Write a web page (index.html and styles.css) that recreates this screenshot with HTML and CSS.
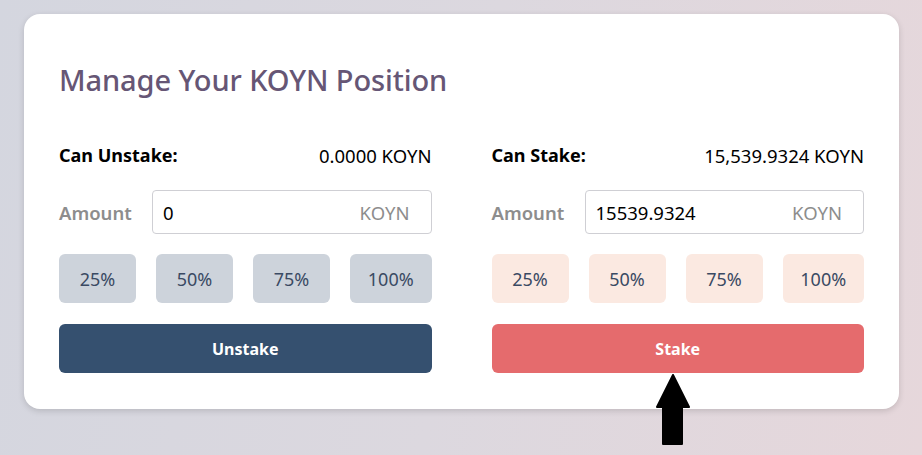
FILE: index.html
```html
<!DOCTYPE html>
<html>
<head>
<meta charset="utf-8">
<link rel="stylesheet" href="styles.css">
</head>
<body>
<div class="page">
  <div class="card">
    <h1 class="title">Manage Your KOYN Position</h1>
    <div class="cols">
      <div class="col">
        <div class="row-info"><span class="lbl">Can Unstake:</span><span class="val">0.0000 KOYN</span></div>
        <div class="row-amount">
          <span class="amt-lbl">Amount</span>
          <div class="input"><span class="in-val">0</span><span class="unit">KOYN</span></div>
        </div>
        <div class="pcts">
          <button class="pct gray">25%</button>
          <button class="pct gray">50%</button>
          <button class="pct gray">75%</button>
          <button class="pct gray wide">100%</button>
        </div>
        <button class="main unstake">Unstake</button>
      </div>
      <div class="col">
        <div class="row-info"><span class="lbl">Can Stake:</span><span class="val">15,539.9324 KOYN</span></div>
        <div class="row-amount">
          <span class="amt-lbl">Amount</span>
          <div class="input"><span class="in-val">15539.9324</span><span class="unit">KOYN</span></div>
        </div>
        <div class="pcts">
          <button class="pct peach">25%</button>
          <button class="pct peach">50%</button>
          <button class="pct peach">75%</button>
          <button class="pct peach wide">100%</button>
        </div>
        <button class="main stake">Stake</button>
      </div>
    </div>
  </div>
  <svg class="arrow" width="36" height="72" viewBox="0 0 36 72">
    <path d="M18 1 L34 33 L27 33 L27 70 L8 70 L8 33 L2 33 Z" fill="#000" stroke="#000" stroke-width="2" stroke-linejoin="round"/>
  </svg>
</div>
</body>
</html>
```
FILE: styles.css
```css
* { box-sizing: border-box; }
html, body { margin: 0; padding: 0; }
body {
  width: 922px;
  height: 455px;
  overflow: hidden;
  font-family: "Noto Sans", "Open Sans", sans-serif;
  background: linear-gradient(100deg, #d4d6df 0%, #dcd8df 50%, #e6d7db 100%);
}
.page {
  position: relative;
  padding: 14px 24px 0 24px;
  height: 455px;
}
.card {
  width: 875px;
  background: #fff;
  border-radius: 16px;
  box-shadow: 0 2px 6px rgba(0,0,0,0.15);
  padding: 50px 35px 36px 35px;
}
.title {
  margin: 0;
  font-size: 29px;
  font-weight: 500;
  color: #665675;
  line-height: 32px;
  letter-spacing: -0.1px;
}
.cols {
  display: flex;
  gap: 60px;
  margin-top: 47px;
}
.col {
  flex: 1;
  display: flex;
  flex-direction: column;
}
.row-info {
  display: flex;
  justify-content: space-between;
  align-items: center;
  height: 24px;
  color: #000;
}
.lbl { font-weight: 700; font-size: 18px; }
.val { font-weight: 400; font-size: 18.5px; }
.row-amount {
  display: flex;
  align-items: center;
  margin-top: 23px;
  gap: 16px;
}
.amt-lbl {
  font-size: 18.5px;
  font-weight: 600;
  color: #8d8d8d;
  width: 77px;
}
.input {
  flex: 1;
  height: 44px;
  border: 1px solid #cfcfd4;
  border-radius: 4px;
  display: flex;
  align-items: center;
  justify-content: space-between;
  padding: 0 21px 0 10px;
  font-size: 18.5px;
}
.in-val { color: #000; }
.unit { color: #8d8d8d; }
.pcts {
  display: flex;
  gap: 20px;
  margin-top: 20px;
}
.pct {
  flex: 0 0 77px;
  height: 49px;
  border: none;
  border-radius: 6px;
  font-family: inherit;
  font-size: 18px;
  color: #3a4a63;
  padding: 0;
}
.pct.wide { flex: 1; }
.gray { background: #cdd3db; }
.peach { background: #fbe9e1; }
.main {
  margin-top: 21px;
  height: 49px;
  border: none;
  border-radius: 6px;
  font-family: inherit;
  font-size: 16px;
  font-weight: 700;
  color: #fff;
}
.unstake { background: #35506f; }
.stake { background: #e56b6d; }
.arrow {
  position: absolute;
  left: 655px;
  top: 374px;
}
```
